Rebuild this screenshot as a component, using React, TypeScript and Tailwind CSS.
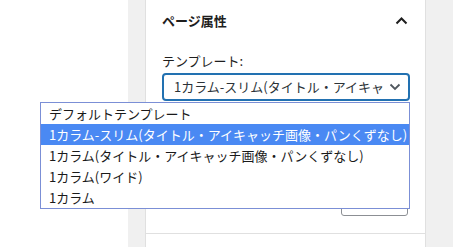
import React from "react";

const font = { fontFamily: '"Noto Sans CJK JP", "Noto Sans", sans-serif' };

const options = [
  "デフォルトテンプレート",
  "1カラム-スリム(タイトル・アイキャッチ画像・パンくずなし)",
  "1カラム(タイトル・アイキャッチ画像・パンくずなし)",
  "1カラム(ワイド)",
  "1カラム",
];

export default function App() {
  return (
    <div className="relative flex w-[453px] h-[247px] overflow-hidden bg-white" style={font}>
      <div className="w-[128px] shrink-0 bg-white" />
      <div className="w-[18px] shrink-0 bg-[#f0f0f0] border-r border-[#e0e0e0]" />
      <div className="w-[280px] shrink-0 bg-white border-r border-[#e0e0e0] flex flex-col">
        <div className="px-4 border-b border-[#e0e0e0]">
          <div className="h-[42px] flex items-center justify-between">
            <span className="text-[13px] font-bold text-[#1e1e1e] leading-4">ページ属性</span>
            <svg width="13" height="8" viewBox="0 0 13 8" className="mr-[1px]">
              <path d="M1.5 6.5 L6.5 1.5 L11.5 6.5" fill="none" stroke="#1e1e1e" strokeWidth="2" />
            </svg>
          </div>
          <div className="mt-[11px] text-[13px] leading-4 text-[#1e1e1e]">テンプレート:</div>
          <div className="mt-1 h-[28px] w-[248px] border-2 border-[#2271b1] rounded-[4px] flex items-center pl-[10px] pr-[7px]">
            <span className="flex-1 overflow-hidden whitespace-nowrap text-[13px] text-[#2c3338] leading-4">
              1カラム-スリム(タイトル・アイキャッチ画像・パンくずなし)
            </span>
            <svg width="12" height="8" viewBox="0 0 12 8" className="ml-[6px] shrink-0">
              <path d="M1.5 1.5 L6 6 L10.5 1.5" fill="none" stroke="#50575e" strokeWidth="1.8" />
            </svg>
          </div>
          <div className="mt-[85px] flex justify-end pr-[1px]">
            <div className="w-[67px] h-[30px] border border-[#8c8f94] rounded-[3px]" />
          </div>
          <div className="h-[17px]" />
        </div>
        <div className="flex-1" />
      </div>
      <div className="flex-1 bg-[#f0f0f0]" />

      <div className="absolute left-[40px] top-[102px] w-[370px] h-[107px] border border-[#7b8fd6] bg-white">
        {options.map((o, i) => (
          <div
            key={o}
            className={
              "h-[21px] pl-[8px] flex items-center whitespace-nowrap text-[13px] leading-4 " +
              (i === 1 ? "bg-[#4a89f3] text-white" : "text-[#1a1a1a]")
            }
          >
            {o}
          </div>
        ))}
      </div>
    </div>
  );
}
